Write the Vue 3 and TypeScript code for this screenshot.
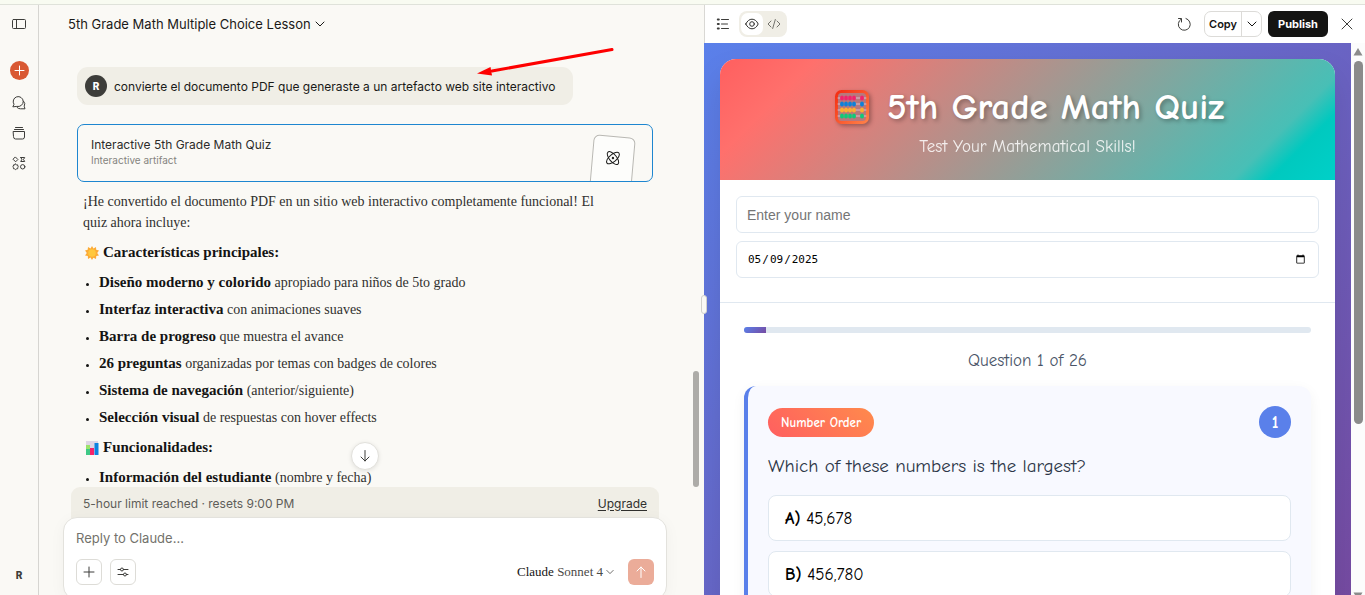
<script setup lang="ts">
import { computed, ref } from 'vue'

interface Item { lead: string; rest: string }

const features: Item[] = [
  { lead: 'Diseño moderno y colorido', rest: 'apropiado para niños de 5to grado' },
  { lead: 'Interfaz interactiva', rest: 'con animaciones suaves' },
  { lead: 'Barra de progreso', rest: 'que muestra el avance' },
  { lead: '26 preguntas', rest: 'organizadas por temas con badges de colores' },
  { lead: 'Sistema de navegación', rest: '(anterior/siguiente)' },
  { lead: 'Selección visual', rest: 'de respuestas con hover effects' },
]
const functions: Item[] = [{ lead: 'Información del estudiante', rest: '(nombre y fecha)' }]
const options = [
  { key: 'A', text: '45,678' },
  { key: 'B', text: '456,780' },
]

const reply = ref('')
const studentName = ref('')
const quizDate = ref('2025-05-09')
const current = ref(1)
const total = 26
const progress = computed(() => `${(current.value / total) * 100}%`)
const beadRows = [
  { y: 8, color: '#f0246c' },
  { y: 14, color: '#0f80d7' },
  { y: 20, color: '#ffae2e' },
  { y: 26, color: '#12c878' },
]
const beadColumns = [7, 11, 15, 19, 27]
</script>

<template>
  <div class="page">
    <div class="strip"></div>
    <div class="shell">
      <nav class="rail" aria-label="Main">
        <button class="rail-btn toggle" aria-label="Toggle sidebar">
          <svg width="16" height="16" viewBox="0 0 16 16"><rect x="1.5" y="3.500" width="13" height="9" rx="1" /><path d="M5.500 3.500v9" /></svg>
        </button>
        <button class="rail-btn new" aria-label="New chat">
          <svg width="19" height="19" viewBox="0 0 19 19"><path d="M9.500 5v9M5 9.500h9" /></svg>
        </button>
        <button class="rail-btn" aria-label="Chats">
          <svg width="16" height="16" viewBox="0 0 16 16"><path d="M2 11.500 3 9.300A5 5 0 1 1 6.200 11.500Z" /><path d="M12.600 6.200A4.200 4.200 0 0 1 13.200 11.200L14 13.800H9.500A4.400 4.400 0 0 1 6 12.400" /></svg>
        </button>
        <button class="rail-btn" aria-label="Projects">
          <svg width="16" height="16" viewBox="0 0 16 16"><path d="M4.500 2.500h7M3.500 4.500h9M2.500 6.500h11v5.500a2 2 0 0 1-2 2h-7a2 2 0 0 1-2-2Z" /></svg>
        </button>
        <button class="rail-btn" aria-label="Artifacts">
          <svg width="16" height="16" viewBox="0 0 16 16"><path d="m4.600 2.200 2.300 2.300-2.300 2.300-2.300-2.300ZM9.700 2.500h4l-1.200 2 1.200 2h-4l1.200-2Z" /><path d="m4.600 9 .9.800 1.200.1.100 1.200.6.700-.6.800-.1 1.100-1.200.2-.9.700-.9-.7-1.200-.2-.1-1.100-.6-.8.600-.7.100-1.200 1.200-.1Z" /><circle cx="11.700" cy="11.800" r="2.200" /></svg>
        </button>
        <button class="rail-btn profile" aria-label="Profile">R</button>
      </nav>

      <main class="chat">
        <header class="chat-head">
          <button class="title">
            5th Grade Math Multiple Choice Lesson
            <svg width="10" height="10" viewBox="0 0 10 10"><path d="m1 3 4 4 4-4" /></svg>
          </button>
        </header>

        <section class="thread">
          <div class="bubble">
            <span class="avatar">R</span>
            <span>convierte el documento PDF que generaste a un artefacto web site interactivo</span>
          </div>
          <button class="artifact">
            <span class="artifact-text">
              <span class="artifact-name">Interactive 5th Grade Math Quiz</span>
              <span class="artifact-kind">Interactive artifact</span>
            </span>
            <span class="sheet">
              <svg width="16" height="16" viewBox="0 0 16 16"><ellipse cx="8" cy="8" rx="7.800" ry="3.600" transform="rotate(45 8 8)" /><ellipse cx="8" cy="8" rx="7.800" ry="3.600" transform="rotate(-45 8 8)" /><circle cx="8" cy="8" r=".7" /></svg>
            </span>
          </button>
          <div class="prose">
            <p>¡He convertido el documento PDF en un sitio web interactivo completamente funcional! El quiz ahora incluye:</p>
            <h2>
              <svg width="14" height="14" viewBox="0 0 14 14"><path fill="#fcab35" d="m7 0 1.500 2.500L11 1l.2 2.800L14 4.500 12.200 7 14 9.500l-2.700.6L11 13l-2.600-1.300L7 14l-1.500-2.400L3 13l-.2-2.900L0 9.500 1.800 7 0 4.500l2.700-.7L3 1l2.500 1.500Z" /><circle cx="7" cy="7" r="3.800" fill="#ffc83d" /></svg>
              Características principales:
            </h2>
            <ul>
              <li v-for="item in features" :key="item.lead"><strong>{{ item.lead }}</strong> {{ item.rest }}</li>
            </ul>
            <h2>
              <svg width="14" height="14" viewBox="0 0 14 14"><path fill="#ded5e5" d="M1 0h12v13H1z" /><path fill="#3ec986" d="M1 4h4v10H1z" /><path fill="#9be36a" d="M1 4h4v4H1z" /><path fill="#f5246a" d="M5 7h4v7H5z" /><path fill="#0d83e0" d="M9.500 2H13.500v12h-4z" /></svg>
              Funcionalidades:
            </h2>
            <ul>
              <li v-for="item in functions" :key="item.lead"><strong>{{ item.lead }}</strong> {{ item.rest }}</li>
            </ul>
          </div>
        </section>

        <footer class="composer">
          <button class="scroll-down" aria-label="Scroll to bottom">
            <svg width="16" height="16" viewBox="0 0 16 16"><path d="M8 2.500v10.500M4 9l4 4 4-4" /></svg>
          </button>
          <div class="limit">
            <span>5-hour limit reached · resets 9:00 PM</span>
            <a href="#upgrade">Upgrade</a>
          </div>
          <form class="box" @submit.prevent>
            <input v-model="reply" class="reply" aria-label="Message" placeholder="Reply to Claude..." />
            <div class="tools">
              <button type="button" class="tool" aria-label="Add">
                <svg width="14" height="14" viewBox="0 0 14 14"><path d="M7 2v10M2 7h10" /></svg>
              </button>
              <button type="button" class="tool" aria-label="Tools">
                <svg width="14" height="14" viewBox="0 0 14 14"><path d="M2 4.500h2.500M7.500 4.500H12M2 9.500h5.500M10.500 9.500H12" /><circle cx="6" cy="4.500" r="1.500" /><circle cx="9" cy="9.500" r="1.500" /></svg>
              </button>
              <button type="button" class="model">
                <span><b>Claude</b> Sonnet 4</span>
                <svg width="8" height="8" viewBox="0 0 10 10"><path d="m1 3 4 4 4-4" /></svg>
              </button>
              <button class="send" aria-label="Send">
                <svg width="14" height="14" viewBox="0 0 14 14"><path d="M7 12.500V2M3 6l4-4 4 4" /></svg>
              </button>
            </div>
          </form>
        </footer>
        <div class="chat-thumb"></div>
        <svg class="arrow" width="140" height="34" viewBox="0 0 140 34"><path d="M136 4.500 16 26" stroke="#fe0000" stroke-width="3" stroke-linecap="round" /><path d="M1 28.500 14.500 22l1.500 8.500Z" fill="#fe0000" /></svg>
      </main>

      <aside class="panel">
        <div class="handle"></div>
        <header class="bar">
          <button class="icon-btn" aria-label="Contents">
            <svg width="14" height="14" viewBox="0 0 14 14"><path d="M5.500 2.500h7M5.500 7h6M5.500 11.500h7" /><path class="dots" d="M1.800 2.500h1M1.800 7h1M1.800 11.500h1" /></svg>
          </button>
          <div class="switch">
            <button class="seg on" aria-label="Preview">
              <svg width="14" height="14" viewBox="0 0 14 14"><path d="M.8 7C2.300 3.800 4.500 2.200 7 2.200S11.700 3.800 13.200 7C11.700 10.200 9.500 11.800 7 11.800S2.300 10.200 .8 7Z" /><circle cx="7" cy="7" r="2.300" /></svg>
            </button>
            <button class="seg" aria-label="Code">
              <svg width="14" height="14" viewBox="0 0 14 14"><path d="M4 4 1 7l3 3M10 4l3 3-3 3M8.300 2.500l-2.600 9" /></svg>
            </button>
          </div>
          <button class="icon-btn reload" aria-label="Reload">
            <svg width="14" height="14" viewBox="0 0 14 14"><path d="M4 2.200A6 6 0 1 0 9 1.500M1.500 1.500H4.500V5" /></svg>
          </button>
          <div class="copy">
            <button class="copy-main">Copy</button>
            <button class="copy-more" aria-label="More copy options">
              <svg width="10" height="10" viewBox="0 0 10 10"><path d="m1 3 4 4 4-4" /></svg>
            </button>
          </div>
          <button class="publish">Publish</button>
          <button class="icon-btn close" aria-label="Close">
            <svg width="12" height="12" viewBox="0 0 12 12"><path d="m1 1 10 10M11 1 1 11" /></svg>
          </button>
        </header>

        <div class="preview">
          <div class="stage">
            <article class="quiz">
              <header class="hero">
                <h1>
                  <svg class="abacus" width="34" height="34" viewBox="0 0 34 34">
                    <defs><linearGradient id="frame" x2="1" y2="1"><stop stop-color="#f52d12" /><stop offset="1" stop-color="#ff8048" /></linearGradient></defs>
                    <rect x="1.500" y="1.500" width="31" height="31" rx="5" fill="#b8787c" stroke="url(#frame)" stroke-width="3" />
                    <g v-for="row in beadRows" :key="row.y">
                      <path :d="`M3 ${row.y}h28`" stroke="#d9bdcf" stroke-width="1" />
                      <ellipse v-for="x in beadColumns" :key="x" :cx="x" :cy="row.y" rx="2" ry="2.500" :fill="row.color" />
                    </g>
                  </svg>
                  5th Grade Math Quiz
                </h1>
                <p>Test Your Mathematical Skills!</p>
              </header>
              <section class="student">
                <input v-model="studentName" type="text" aria-label="Name" placeholder="Enter your name" />
                <input v-model="quizDate" class="date" type="date" aria-label="Date" />
              </section>
              <section class="body">
                <div class="track"><div class="fill" :style="{ width: progress }"></div></div>
                <p class="count">Question {{ current }} of {{ total }}</p>
                <div class="question">
                  <div class="question-head">
                    <span class="badge">Number Order</span>
                    <span class="number">{{ current }}</span>
                  </div>
                  <h3>Which of these numbers is the largest?</h3>
                  <button v-for="option in options" :key="option.key" class="option">
                    <b>{{ option.key }})</b> {{ option.text }}
                  </button>
                </div>
              </section>
            </article>
          </div>
          <div class="scrollbar">
            <svg width="10" height="8" viewBox="0 0 10 8"><path d="M5 0 9.500 7.500H.5Z" /></svg>
            <div class="scroll-track"><div class="scroll-thumb"></div></div>
            <svg class="down" width="10" height="8" viewBox="0 0 10 8"><path d="M5 8 9.500 .5H.5Z" /></svg>
          </div>
        </div>
      </aside>
    </div>
  </div>
</template>

<style>
body { margin: 0; overflow: hidden; }
</style>

<style scoped>
* { box-sizing: border-box; }
.page { height: 100vh; display: flex; flex-direction: column; overflow: hidden; background: #faf9f5; color: #1a1a18; font-family: Inter, "Liberation Sans", sans-serif; }
h1, h2, h3, p, ul { margin: 0; padding: 0; }
button { font: inherit; color: inherit; border: 0; background: none; padding: 0; cursor: pointer; }
svg { display: block; flex: none; fill: none; stroke-linecap: round; stroke-linejoin: round; }
button svg { stroke: currentColor; stroke-width: 1; }
.strip { flex: none; height: 5px; background: #f8fbf1; border-bottom: 1px solid #dfe2da; }
.shell { flex: 1; min-height: 0; display: grid; grid-template-columns: 39px minmax(0, 665fr) minmax(0, 661fr); grid-template-rows: minmax(0, 1fr); }

.rail { display: flex; flex-direction: column; align-items: center; border-right: 1px solid #d6d5d1; padding: 10px 0 12px; color: #3d3d3a; }
.rail-btn { height: 18px; margin-bottom: 12px; display: grid; place-items: center; }
.rail-btn.toggle { margin-bottom: 28px; }
.rail-btn.new { width: 19px; height: 19px; border-radius: 50%; background: #d95832; color: #fff; margin-bottom: 14px; }
.rail-btn.profile { margin: auto 0 0; font-size: 10px; font-weight: 800; height: 16px; }

.chat { position: relative; display: flex; flex-direction: column; min-height: 0; }
.chat-head { flex: none; height: 38px; padding-left: 29px; display: flex; align-items: center; }
.title { display: flex; align-items: center; gap: 4px; font-size: 13px; white-space: nowrap; }
.thread { flex: 1; min-height: 0; overflow: hidden; padding: 24px 51px 0 38px; }
.bubble { width: fit-content; height: 38px; display: flex; align-items: center; gap: 7px; padding: 0 18px 0 8px; border-radius: 11px; background: #f0eee6; font-size: 12px; white-space: nowrap; }
.avatar { width: 22px; height: 22px; border-radius: 50%; background: #3d3d3a; color: #fff; display: grid; place-items: center; font-size: 10px; font-weight: 800; }
.artifact { position: relative; width: 100%; height: 58px; margin-top: 19px; padding: 0 19px 0 13px; display: flex; justify-content: space-between; border: 1px solid #1d86d0; border-radius: 7px; overflow: hidden; text-align: left; }
.artifact-text { display: flex; flex-direction: column; padding-top: 12px; }
.artifact-name { font-size: 12px; line-height: 16px; color: #2c2c2a; }
.artifact-kind { font-size: 10px; line-height: 14px; color: #85847e; }
.sheet { width: 42px; height: 66px; margin-top: 11px; padding-top: 13px; display: flex; justify-content: center; border: 1px solid #b9b8b3; border-radius: 6px; background: #fdfdfb; transform: rotate(5deg); }
.prose { padding: 9px 42px 0 6px; font-family: "Liberation Serif", serif; font-size: 14px; line-height: 21px; color: #30302e; }
.prose strong, .prose h2 { color: #141413; font-size: 15px; font-weight: 700; line-height: 20px; }
.prose h2 { display: flex; align-items: center; gap: 4px; margin: 9px 0; padding-left: 2px; line-height: 21px; }
.prose ul { list-style: none; display: grid; grid-auto-rows: 21px; gap: 6px; }
.prose li { white-space: nowrap; }
.prose li::before { content: ""; display: inline-block; width: 3px; height: 3px; border-radius: 50%; margin: 0 10px 1px 3px; background: #141413; }

.composer { position: relative; flex: none; padding: 0 38px 0 25px; margin-bottom: -5px; }
.scroll-down { position: absolute; left: calc(50% - 21px); top: -45px; width: 28px; height: 28px; border: 1px solid #e2e1dc; border-radius: 50%; background: #fff; display: grid; place-items: center; color: #3d3d3a; box-shadow: 0 1px 4px rgba(0, 0, 0, .1); }
.limit { height: 38px; margin: 0 7px -8px; padding: 0 12px 6px; display: flex; align-items: center; justify-content: space-between; border-radius: 9px 9px 0 0; background: #f0eee6; font-size: 12px; color: #5e5d59; }
.limit a { color: #30302e; text-underline-offset: 2px; }
.box { position: relative; height: 83px; margin: 0 -1px; padding: 10px 12px 0; border: 1px solid #e3e2dd; border-radius: 14px; background: #fff; box-shadow: 0 3px 16px rgba(0, 0, 0, .04); }
.reply { display: block; width: 100%; height: 20px; padding: 0; border: 0; outline: 0; background: none; font: 13px Inter, "Liberation Sans", sans-serif; color: #30302e; }
.reply::placeholder { color: #73726c; opacity: 1; }
.tools { display: flex; align-items: center; gap: 8px; margin-top: 11px; }
.tool { width: 26px; height: 26px; border: 1px solid #dddcd7; border-radius: 6px; display: grid; place-items: center; color: #3d3d3a; }
.model { margin-left: auto; margin-right: 6px; display: flex; align-items: center; gap: 3px; font-family: "Liberation Serif", serif; font-size: 13px; color: #4b4a47; }
.model b { font-weight: 400; color: #141413; }
.send { width: 26px; height: 26px; border-radius: 6px; display: grid; place-items: center; background: #ebac99; color: #fff; }
.chat-thumb { position: absolute; right: 5px; bottom: 108px; top: 366px; width: 6px; border-radius: 3px; background: #adaca8; }
.arrow { position: absolute; left: 437px; top: 40px; }

.panel { position: relative; display: flex; flex-direction: column; min-height: 0; }
.handle { position: absolute; z-index: 1; left: -3px; top: 290px; width: 6px; height: 19px; border: 1px solid #d1d0cb; border-radius: 3px; background: #faf9f5; }
.bar { flex: none; height: 38px; padding: 0 12px 0 11px; display: flex; align-items: center; background: #fff; border-left: 1px solid #d9d8d4; color: #3d3d3a; }
.dots { stroke-width: 2; }
.switch { display: flex; padding: 2px; margin-left: 9px; height: 26px; border-radius: 8px; background: #f0eee6; }
.seg { width: 22px; display: grid; place-items: center; border-radius: 7px; color: #73726c; }
.seg.on { background: #fff; color: #30302e; }
.reload { margin-left: auto; margin-right: 13px; }
.copy { display: flex; height: 26px; border: 1px solid #dcdbd8; border-radius: 7px; font-size: 11px; font-weight: 600; color: #141413; }
.copy-main { width: 37px; border-right: 1px solid #dcdbd8; }
.copy-more { width: 19px; display: grid; place-items: center; }
.publish { width: 60px; height: 26px; margin: 0 13px 0 6px; border-radius: 6px; background: #141413; color: #fff; font-size: 11px; font-weight: 700; }

.preview { flex: 1; min-height: 0; display: flex; }
.stage { flex: 1; min-width: 0; overflow: hidden; padding: 16px; background: linear-gradient(135deg, #5a80ea, #764ba2); font-family: "Comic Neue", "Comic Sans MS", "Noto Sans", sans-serif; }
.quiz { min-height: 700px; border-radius: 16px; overflow: hidden; background: #fff; box-shadow: 0 16px 32px rgba(0, 0, 0, .1); }
.hero { height: 121px; padding-top: 24px; text-align: center; color: #fff; background: linear-gradient(135deg, #ff5f5f, #ff706c 13%, #48bfb6 86%, #00c9bf 91%, #00d0c8); }
.hero h1 { display: flex; justify-content: center; align-items: center; gap: 18px; height: 48px; padding-left: 4px; font-size: 37px; line-height: 48px; font-weight: 700; text-shadow: 2px 2px 4px rgba(0, 0, 0, .3); white-space: nowrap; }
.abacus { filter: drop-shadow(2px 2px 2px rgba(0, 0, 0, .3)); }
.hero p { margin-top: 4px; font-size: 17px; line-height: 24px; opacity: .85; }
.student { display: grid; gap: 8px; padding: 16px 16px 24px; border-bottom: 1px solid #e0e8f0; }
.student input { width: 100%; height: 37px; padding: 0 10px; border: 1px solid #e0e8f0; border-radius: 6px; outline: 0; background: #fff; color: #000; font: 14px "Liberation Sans", sans-serif; }
.student input::placeholder { color: #757575; opacity: 1; }
.student input.date { font: 11px "DejaVu Sans Mono", monospace; }
.body { padding: 24px; }
.track { height: 6px; border-radius: 3px; overflow: hidden; background: #e0e8f0; }
.fill { height: 6px; background: linear-gradient(135deg, #5a80ea, #764ba2); }
.count { margin: 16px 0 14px; text-align: center; font-size: 17px; line-height: 23px; color: #4a5568; }
.question { padding: 20px 20px 24px; border-left: 4px solid #5a80ea; border-radius: 12px; background: #f8f9ff; box-shadow: 0 4px 14px rgba(0, 0, 0, .05); }
.question-head { display: flex; justify-content: space-between; align-items: center; }
.badge { padding: 0 13px; border-radius: 15px; line-height: 29px; font-size: 13px; font-weight: 700; color: #fff; background: linear-gradient(45deg, #ff5f60, #ff8a4c); }
.number { width: 32px; height: 32px; border-radius: 50%; display: grid; place-items: center; background: #5a80ea; color: #fff; font-size: 17px; font-weight: 700; }
.question h3 { margin: 13px 0 14px; font-size: 19px; line-height: 30px; font-weight: 400; color: #2d3748; }
.option { display: block; width: 100%; height: 46px; margin-bottom: 10px; padding: 0 16px; border: 1px solid #e0e8f0; border-radius: 8px; background: #fff; text-align: left; font-size: 17px; color: #000; }
.scrollbar { flex: none; width: 14px; padding: 5px 0 0; display: flex; flex-direction: column; align-items: center; background: #fcfcfc; overflow: hidden; }
.scrollbar svg { fill: #8b8b8b; }
.scrollbar .down { margin-bottom: -5px; }
.scroll-track { flex: 1; width: 9px; margin: 5px 0; }
.scroll-thumb { height: 69%; border-radius: 5px; background: #8b8b8b; }
</style>
